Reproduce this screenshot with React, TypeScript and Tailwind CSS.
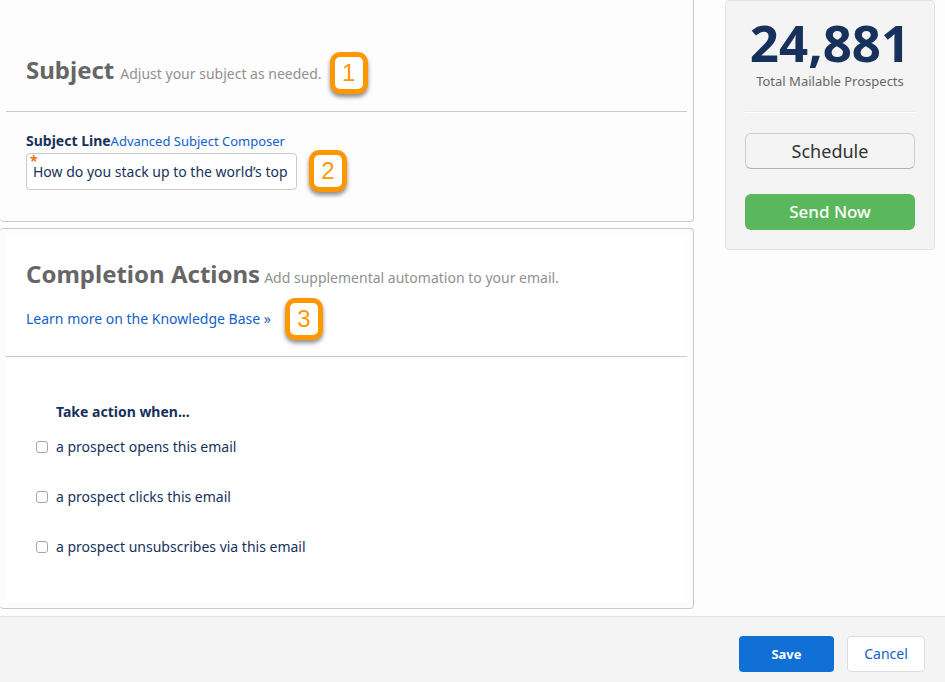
import type { ReactNode } from 'react';

const triggers = [
  { id: 'opens', label: 'a prospect opens this email' },
  { id: 'clicks', label: 'a prospect clicks this email' },
  { id: 'unsubscribes', label: 'a prospect unsubscribes via this email' },
];

function StepBadge({ children }: { children: ReactNode }) {
  return (
    <span className="flex h-[42px] w-[38px] shrink-0 items-center justify-center rounded-[10px] border-5 border-[#ff9800] bg-white font-['Liberation_Sans',sans-serif] text-2xl text-[#ff9800] shadow-[0_3px_4px_rgba(0,0,0,0.45)]">
      {children}
    </span>
  );
}

export default function App() {
  return (
    <div className="flex min-h-screen flex-col bg-[#fdfdfd] font-['Noto_Sans',sans-serif] text-sm text-[#16325c]">
      <main className="flex flex-1 items-start gap-[31px] pr-[10px] pb-[7px]">
        <div className="flex min-w-0 flex-1 flex-col gap-[6px]">
          {/* Subject */}
          <section className="rounded-b border border-t-0 border-l-0 border-[#c9c9c9] px-[6px]">
            <header className="flex items-start gap-2 border-b border-[#c9c9c9] px-5 pt-[52px] pb-[17px]">
              <div className="flex items-baseline gap-[6px] pt-0.5">
                <h2 className="text-2xl leading-8 font-bold text-[#666]">Subject</h2>
                <p className="text-[#919191]">Adjust your subject as needed.</p>
              </div>
              <StepBadge>1</StepBadge>
            </header>
            <div className="px-5 pt-5 pb-[29px]">
              <div className="flex items-baseline leading-[18px]">
                <label htmlFor="subject" className="font-bold">Subject Line</label>
                <a href="#composer" className="text-[13px] text-[#1361c9]">Advanced Subject Composer</a>
              </div>
              <div className="flex items-center gap-3">
                <div className="relative">
                  <input
                    id="subject"
                    type="text"
                    required
                    defaultValue="How do you stack up to the world’s top marketers?"
                    className="block h-[37px] w-[271px] rounded border border-[#c9c9c9] bg-white px-[6px]"
                  />
                  <span className="absolute top-0 left-1 leading-4 font-bold text-[#e87722]">*</span>
                </div>
                <StepBadge>2</StepBadge>
              </div>
            </div>
          </section>

          {/* Completion actions */}
          <section className="rounded border border-l-0 border-[#c9c9c9] p-[6px]">
            <div className="bg-white">
              <header className="border-b border-[#c9c9c9] px-5 pt-[23px] pb-4">
                <div className="flex items-baseline gap-1">
                  <h2 className="text-2xl leading-8 font-bold text-[#666]">Completion Actions</h2>
                  <p className="text-[#919191]">Add supplemental automation to your email.</p>
                </div>
                <div className="mt-2 flex items-center gap-[14px]">
                  <a href="#knowledge-base" className="text-[#1361c9]">Learn more on the Knowledge Base »</a>
                  <StepBadge>3</StepBadge>
                </div>
              </header>
              <div className="px-[30px] pt-[45px] pb-[45px]">
                <fieldset>
                  <legend className="pl-5 leading-5 font-bold">Take action when...</legend>
                  <div className="flex flex-col gap-[30px] pt-[15px]">
                    {triggers.map((t) => (
                      <label key={t.id} htmlFor={t.id} className="flex items-center gap-2 leading-5">
                        <input
                          id={t.id}
                          type="checkbox"
                          className="size-3 appearance-none rounded-[3px] border border-[#a6a6a6] bg-white checked:bg-[#1070d6]"
                        />
                        {t.label}
                      </label>
                    ))}
                  </div>
                </fieldset>
              </div>
            </div>
          </section>
        </div>

        <aside className="w-[210px] shrink-0 rounded border border-[#e3e3e3] bg-[#f4f4f4] px-[19px] pt-3 pb-[19px] text-center">
          <p className="text-[51px] leading-[58px] font-bold">24,881</p>
          <p className="text-[13px] leading-5 text-[#666]">Total Mailable Prospects</p>
          <hr className="mt-5 mb-5 border-t border-b border-t-[#ebebeb] border-b-white" />
          <button type="button" className="h-9 w-full rounded-md border border-[#ccc] border-b-[#b3b3b3] text-lg leading-6 text-[#333]">
            Schedule
          </button>
          <button type="button" className="mt-[25px] h-9 w-full rounded-md bg-[#5bb75b] text-[17px] leading-6 font-medium text-white">
            Send Now
          </button>
        </aside>
      </main>

      <footer className="flex justify-end gap-[13px] border-t border-[#e3e3e3] bg-[#f4f4f4] pt-[19px] pr-5 pb-[10px]">
        <button type="button" className="h-9 w-[95px] rounded bg-[#1070d6] text-[13px] font-bold text-white">
          Save
        </button>
        <button type="button" className="h-9 w-[78px] rounded border border-[#d8dde6] bg-white text-[#1361c9]">
          Cancel
        </button>
      </footer>
    </div>
  );
}
